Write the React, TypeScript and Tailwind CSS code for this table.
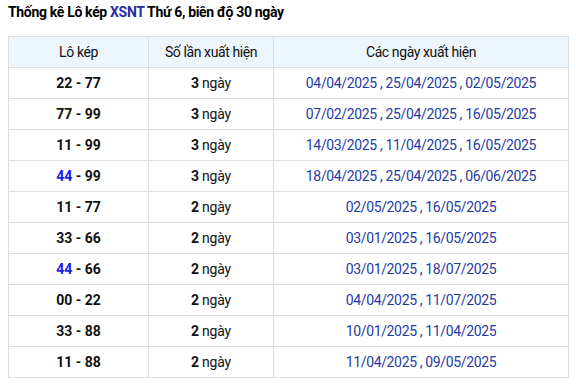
import React from 'react';

type Row = { pair: [string, string]; count: number; dates: string[]; blueFirst?: boolean };

const rows: Row[] = [
  { pair: ['22', '77'], count: 3, dates: ['04/04/2025', '25/04/2025', '02/05/2025'] },
  { pair: ['77', '99'], count: 3, dates: ['07/02/2025', '25/04/2025', '16/05/2025'] },
  { pair: ['11', '99'], count: 3, dates: ['14/03/2025', '11/04/2025', '16/05/2025'] },
  { pair: ['44', '99'], count: 3, dates: ['18/04/2025', '25/04/2025', '06/06/2025'], blueFirst: true },
  { pair: ['11', '77'], count: 2, dates: ['02/05/2025', '16/05/2025'] },
  { pair: ['33', '66'], count: 2, dates: ['03/01/2025', '16/05/2025'] },
  { pair: ['44', '66'], count: 2, dates: ['03/01/2025', '18/07/2025'], blueFirst: true },
  { pair: ['00', '22'], count: 2, dates: ['04/04/2025', '11/07/2025'] },
  { pair: ['33', '88'], count: 2, dates: ['10/01/2025', '11/04/2025'] },
  { pair: ['11', '88'], count: 2, dates: ['11/04/2025', '09/05/2025'] },
];

const App: React.FC = () => {
  return (
    <div className="w-[576px] h-[386px] bg-white font-['Roboto',sans-serif] text-[#111]">
      <h2 className="px-2 pt-[3px] h-[36px] text-[14px] leading-[18px] font-bold text-black tracking-[-0.33px]">
        Thống kê Lô kép <span className="text-[#2b2ba0]">XSNT</span> Thứ 6, biên độ 30 ngày
      </h2>
      <table className="ml-2 w-[560px] border-collapse text-[14px] table-fixed">
        <colgroup>
          <col className="w-[140px]" />
          <col className="w-[125px]" />
          <col className="w-[295px]" />
        </colgroup>
        <thead>
          <tr className="h-[31px] bg-[#eef6fd] tracking-[-0.4px]">
            <th className="border border-[#dddddd] font-normal">Lô kép</th>
            <th className="border border-[#dddddd] font-normal">Số lần xuất hiện</th>
            <th className="border border-[#dddddd] font-normal">Các ngày xuất hiện</th>
          </tr>
        </thead>
        <tbody>
          {rows.map((r, i) => (
            <tr key={i} className="h-[31px]">
              <td className="border border-[#dddddd] text-center font-bold">
                <span className={r.blueFirst ? 'text-[#1a1aee]' : ''}>{r.pair[0]}</span> - {r.pair[1]}
              </td>
              <td className="border border-[#dddddd] text-center tracking-[-0.2px]">
                <b>{r.count}</b> ngày
              </td>
              <td className="border border-[#dddddd] text-center text-[#1f3ba3] tracking-[-0.35px]">
                {r.dates.join(' , ')}
              </td>
            </tr>
          ))}
        </tbody>
      </table>
    </div>
  );
};

export default App;
